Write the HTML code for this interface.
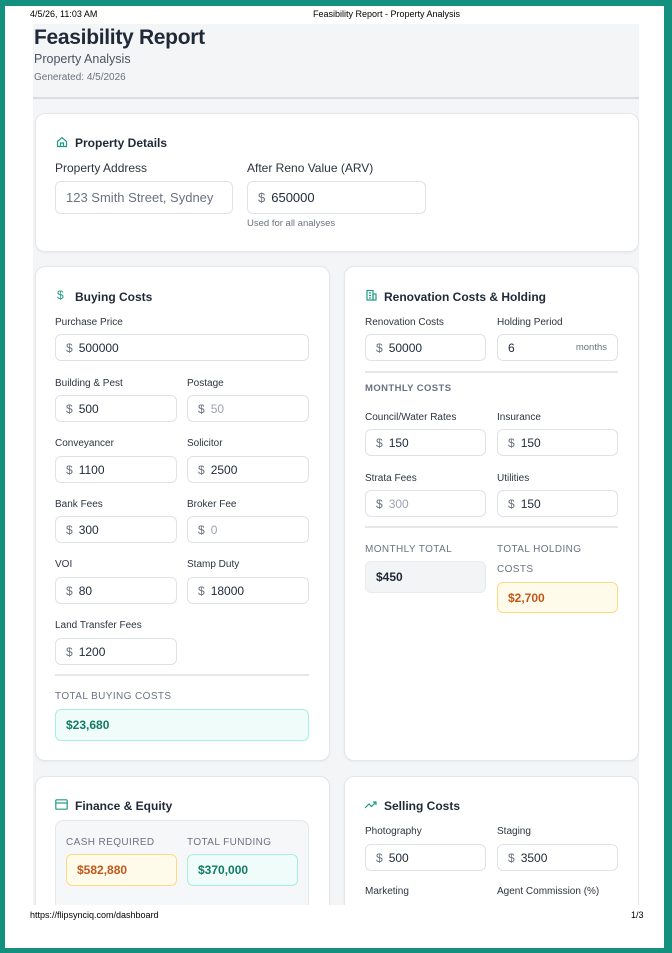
<!DOCTYPE html>
<html><head><meta charset="utf-8"><style>
*{box-sizing:border-box;margin:0;padding:0}
body{width:672px;height:953px;background:#14907f;position:relative;overflow:hidden;font-family:"Liberation Sans",sans-serif;color:#1f2937}
.page{position:absolute;left:5px;top:6px;width:659px;height:942px;background:#fff}
.a{position:absolute;white-space:nowrap}
.gray{position:absolute;left:33px;top:24px;width:606px;height:881px;background:#f4f5f7;overflow:hidden}
.card{position:absolute;background:#fff;border:1px solid #e3e6ea;border-radius:10px;box-shadow:0 1px 2px rgba(0,0,0,.05)}
.lbl{position:absolute;font-size:10px;color:#2d3440;white-space:nowrap;margin-top:1px}
.inp{position:absolute;height:27px;border:1px solid #dfe2e6;border-radius:6px;background:#fff;font-size:12px;color:#1f2937;padding-left:10px;line-height:26px;white-space:nowrap}
.inp b{font-weight:normal;color:#6b7280;margin-right:6px}
.ph{color:#9ca3af}
.ttl{position:absolute;font-size:12px;font-weight:bold;color:#1f2937;white-space:nowrap;margin-top:1px}
.cap{position:absolute;font-size:10px;letter-spacing:.4px;color:#6b7280;white-space:nowrap;margin-top:1px}
.hr{position:absolute;height:2px;background:#e5e7eb}
.box{position:absolute;border-radius:6px;font-size:12px;font-weight:bold;padding-left:10px;line-height:30px}
</style></head><body>
<div class="page"></div>
<div class="a" style="left:30px;top:9px;font-size:9px;color:#000">4/5/26, 11:03 AM</div>
<div class="a" style="left:313px;top:9px;font-size:9px;color:#000">Feasibility Report - Property Analysis</div>
<div class="gray">
 <div class="a" style="left:1px;top:2px;font-size:21px;font-weight:bold;color:#1f2937;letter-spacing:-0.3px">Feasibility Report</div>
 <div class="a" style="left:1px;top:28px;font-size:12.5px;color:#4b5563">Property Analysis</div>
 <div class="a" style="left:1px;top:48px;font-size:10px;color:#6b7280">Generated: 4/5/2026</div>
 <div style="position:absolute;left:0;top:73px;width:606px;height:2px;background:#d9dce1"></div>
</div>
<!-- property card -->
<div class="card" style="left:35px;top:113px;width:604px;height:139px"></div>
<svg class="a" style="left:56px;top:136px" width="12" height="12" viewBox="0 0 12 12" fill="none" stroke="#1f9d83" stroke-width="1.2"><path d="M1.5 5.5L6 1.5l4.5 4V10.5h-9z"/><path d="M4.5 10.5V7h3v3.5"/></svg>
<div class="ttl" style="left:75px;top:135px">Property Details</div>
<div class="a" style="left:55px;top:161px;font-size:12px;color:#2d3440">Property Address</div>
<div class="inp" style="left:55px;top:181px;width:178px;height:33px;line-height:31px;font-size:13px;color:#6b7280">123 Smith Street, Sydney</div>
<div class="a" style="left:247px;top:161px;font-size:12px;color:#2d3440">After Reno Value (ARV)</div>
<div class="inp" style="left:247px;top:181px;width:179px;height:33px;line-height:31px;font-size:13px"><b>$</b>650000</div>
<div class="a" style="left:247px;top:218px;font-size:9.5px;color:#6b7280">Used for all analyses</div>
<!-- buying -->
<div class="card" style="left:35px;top:266px;width:295px;height:495px"></div>
<div class="a" style="left:57px;top:288px;font-size:12px;color:#1f9d83">$</div>
<div class="ttl" style="left:75px;top:289px">Buying Costs</div>
<div class="lbl" style="left:55px;top:316px">Purchase Price</div>
<div class="inp" style="left:55px;top:334px;width:254px"><b>$</b>500000</div>
<div class="lbl" style="left:55px;top:377px">Building &amp; Pest</div><div class="lbl" style="left:187px;top:377px">Postage</div>
<div class="inp" style="left:55px;top:395px;width:122px"><b>$</b>500</div>
<div class="inp" style="left:187px;top:395px;width:122px"><b>$</b><span class="ph">50</span></div>
<div class="lbl" style="left:55px;top:437px">Conveyancer</div><div class="lbl" style="left:187px;top:437px">Solicitor</div>
<div class="inp" style="left:55px;top:456px;width:122px"><b>$</b>1100</div>
<div class="inp" style="left:187px;top:456px;width:122px"><b>$</b>2500</div>
<div class="lbl" style="left:55px;top:498px">Bank Fees</div><div class="lbl" style="left:187px;top:498px">Broker Fee</div>
<div class="inp" style="left:55px;top:516px;width:122px"><b>$</b>300</div>
<div class="inp" style="left:187px;top:516px;width:122px"><b>$</b><span class="ph">0</span></div>
<div class="lbl" style="left:55px;top:558px">VOI</div><div class="lbl" style="left:187px;top:558px">Stamp Duty</div>
<div class="inp" style="left:55px;top:577px;width:122px"><b>$</b>80</div>
<div class="inp" style="left:187px;top:577px;width:122px"><b>$</b>18000</div>
<div class="lbl" style="left:55px;top:619px">Land Transfer Fees</div>
<div class="inp" style="left:55px;top:638px;width:122px"><b>$</b>1200</div>
<div class="hr" style="left:55px;top:674px;width:254px"></div>
<div class="cap" style="left:55px;top:690px">TOTAL BUYING COSTS</div>
<div class="box" style="left:55px;top:709px;width:254px;height:32px;background:#effcf9;border:1px solid #a7f0dd;color:#137a66">$23,680</div>
<!-- reno -->
<div class="card" style="left:344px;top:266px;width:295px;height:495px"></div>
<svg class="a" style="left:365px;top:289px" width="12" height="12" viewBox="0 0 12 12" fill="none" stroke="#1f9d83" stroke-width="1.2"><rect x="2" y="1.5" width="6" height="9.5"/><rect x="8" y="5" width="3" height="6"/><path d="M4 4h2M4 6.5h2M4 9h2"/></svg>
<div class="ttl" style="left:384px;top:289px">Renovation Costs &amp; Holding</div>
<div class="lbl" style="left:365px;top:316px">Renovation Costs</div><div class="lbl" style="left:497px;top:316px">Holding Period</div>
<div class="inp" style="left:365px;top:334px;width:121px"><b>$</b>50000</div>
<div class="inp" style="left:497px;top:334px;width:121px">6<span style="position:absolute;right:10px;font-size:9.5px;color:#6b7280">months</span></div>
<div class="hr" style="left:365px;top:371px;width:253px"></div>
<div class="cap" style="left:365px;top:382px;font-weight:bold;font-size:9.5px">MONTHLY COSTS</div>
<div class="lbl" style="left:365px;top:411px">Council/Water Rates</div><div class="lbl" style="left:497px;top:411px">Insurance</div>
<div class="inp" style="left:365px;top:429px;width:121px"><b>$</b>150</div>
<div class="inp" style="left:497px;top:429px;width:121px"><b>$</b>150</div>
<div class="lbl" style="left:365px;top:472px">Strata Fees</div><div class="lbl" style="left:497px;top:472px">Utilities</div>
<div class="inp" style="left:365px;top:490px;width:121px"><b>$</b><span class="ph">300</span></div>
<div class="inp" style="left:497px;top:490px;width:121px"><b>$</b>150</div>
<div class="hr" style="left:365px;top:526px;width:253px"></div>
<div class="cap" style="left:365px;top:543px">MONTHLY TOTAL</div>
<div class="cap" style="left:497px;top:543px">TOTAL HOLDING</div>
<div class="cap" style="left:497px;top:563px">COSTS</div>
<div class="box" style="left:365px;top:561px;width:121px;height:32px;background:#f3f4f6;border:1px solid #e8eaed;color:#1f2937">$450</div>
<div class="box" style="left:497px;top:582px;width:121px;height:31px;background:#fffbeb;border:1px solid #fcd987;color:#c2571a">$2,700</div>
<!-- bottom cards -->
<div style="position:absolute;left:33px;top:770px;width:606px;height:135px;overflow:hidden">
 <div class="card" style="left:2px;top:6px;width:295px;height:200px"></div>
 <div class="card" style="left:311px;top:6px;width:295px;height:200px"></div>
 <svg class="a" style="left:22px;top:29px" width="13" height="11" viewBox="0 0 13 11" fill="none" stroke="#1f9d83" stroke-width="1.2"><rect x="0.8" y="0.8" width="11.4" height="9.4" rx="1"/><path d="M1 4h11"/></svg>
 <div class="ttl" style="left:42px;top:28px">Finance &amp; Equity</div>
 <div style="position:absolute;left:22px;top:50px;width:254px;height:120px;background:#f6f7f9;border:1px solid #e5e7eb;border-radius:8px"></div>
 <div class="cap" style="left:33px;top:66px">CASH REQUIRED</div>
 <div class="cap" style="left:154px;top:66px">TOTAL FUNDING</div>
 <div class="box" style="left:33px;top:84px;width:111px;height:32px;background:#fffbeb;border:1px solid #fcd987;color:#c2571a">$582,880</div>
 <div class="box" style="left:154px;top:84px;width:111px;height:32px;background:#effcf9;border:1px solid #a7f0dd;color:#137a66">$370,000</div>
 <svg class="a" style="left:331px;top:30px" width="13" height="9" viewBox="0 0 13 9" fill="none" stroke="#1f9d83" stroke-width="1.2"><path d="M1 8l4-4 2.5 2.5L12 2M9 2h3v3"/></svg>
 <div class="ttl" style="left:351px;top:28px">Selling Costs</div>
 <div class="lbl" style="left:332px;top:55px">Photography</div><div class="lbl" style="left:464px;top:55px">Staging</div>
 <div class="inp" style="left:332px;top:74px;width:121px"><b>$</b>500</div>
 <div class="inp" style="left:464px;top:74px;width:121px"><b>$</b>3500</div>
 <div class="lbl" style="left:332px;top:115px">Marketing</div><div class="lbl" style="left:464px;top:115px">Agent Commission (%)</div>
</div>
<div class="a" style="left:30px;top:910px;font-size:9px;color:#000">https://flipsynciq.com/dashboard</div>
<div class="a" style="left:631px;top:910px;font-size:9px;color:#000">1/3</div>
</body></html>
